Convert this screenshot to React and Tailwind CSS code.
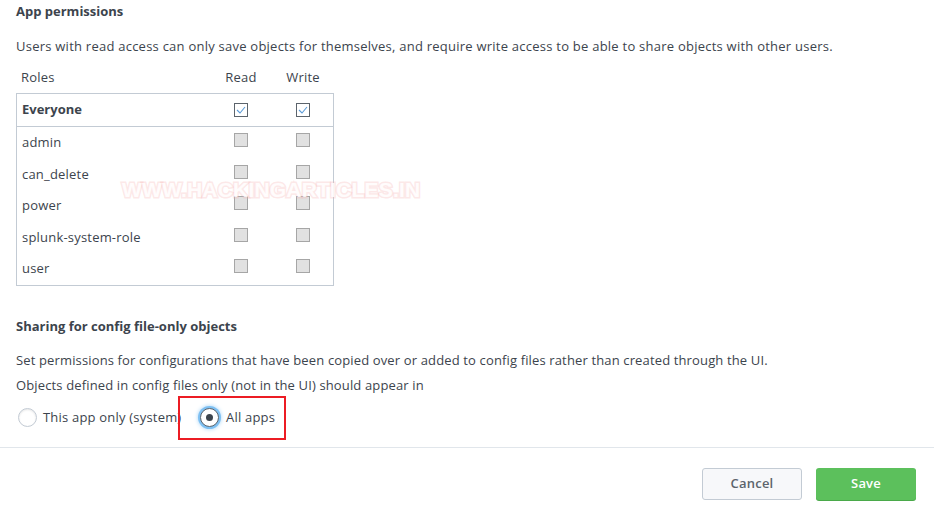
const roles = ['admin', 'can_delete', 'power', 'splunk-system-role', 'user'];

function CheckBox({ checked }) {
  if (checked) {
    return (
      <span className="flex h-[14px] w-[14px] items-center justify-center border border-[#5c646c] bg-white">
        <svg width="10" height="8" viewBox="0 0 10 8" fill="none">
          <path d="M1 4 L4 7 L9 1" stroke="#5a9bd8" strokeWidth="1.1" />
        </svg>
      </span>
    );
  }
  return <span className="block h-[14px] w-[14px] border border-[#a6a6a6] bg-[#e1e1e1]" />;
}

export default function App() {
  return (
    <div className="relative h-[514px] w-[934px] overflow-hidden bg-white text-[13px] tracking-[0.2px] text-[#3c444d]" style={{ fontFamily: '"Open Sans", sans-serif' }}>
      <div className="px-4">
        <h2 className="pt-[2px] text-[13px] font-bold leading-[18px] tracking-normal">App permissions</h2>
        <p className="mt-[17px] leading-[18px] tracking-[0.24px]">
          Users with read access can only save objects for themselves, and require write access to be able to share objects with other users.
        </p>

        <div className="mt-[15px] w-[318px]">
          <div className="flex h-[15px] items-center leading-[15px]">
            <span className="w-[201px] pl-[5px]">Roles</span>
            <span className="w-[48px] text-center">Read</span>
            <span className="ml-[14px] w-[48px] text-center">Write</span>
          </div>
          <div className="mt-[8px] border border-[#c3cbd4]">
            <div className="flex h-[33px] items-center border-b border-[#c3cbd4]">
              <span className="w-[200px] pl-[5px] font-bold tracking-normal">Everyone</span>
              <span className="flex w-[48px] justify-center"><CheckBox checked /></span>
              <span className="ml-[14px] flex w-[48px] justify-center"><CheckBox checked /></span>
            </div>
            {roles.map((r) => (
              <div key={r} className="flex h-[31.5px] items-start">
                <span className="w-[200px] pl-[5px] pt-[6px] leading-[18px]">{r}</span>
                <span className="flex w-[48px] justify-center pt-[6px]"><CheckBox /></span>
                <span className="ml-[14px] flex w-[48px] justify-center pt-[6px]"><CheckBox /></span>
              </div>
            ))}
          </div>
        </div>

        <h2 className="mt-[31px] text-[13px] font-bold leading-[18px] tracking-normal">Sharing for config file-only objects</h2>
        <p className="mt-[16px] leading-[18px] tracking-[0.14px]">
          Set permissions for configurations that have been copied over or added to config files rather than created through the UI.
        </p>
        <p className="mt-[7px] leading-[18px] tracking-[0.14px]">Objects defined in config files only (not in the UI) should appear in</p>

        <div className="mt-[2px] flex h-[44px] items-center">
          <label className="flex w-[162px] items-center pl-[2px]">
            <span className="block h-[19px] w-[19px] shrink-0 rounded-full border border-[#c3cbd4] bg-white shadow-[inset_0_1px_2px_rgba(0,0,0,0.1)]" />
            <span className="ml-[6px] whitespace-nowrap">This app only (system)</span>
          </label>
          <div className="relative z-10 flex h-[44px] w-[108px] items-center border-2 border-[#ec1c24] pl-[20px]">
            <span className="flex h-[19px] w-[19px] items-center justify-center rounded-full border border-[#5c646c] bg-white shadow-[0_0_0_2px_#7ec0f2,0_0_4px_2px_#a6d4f7]">
              <span className="block h-[7px] w-[7px] rounded-full bg-[#3c444d]" />
            </span>
            <span className="ml-[7px]">All apps</span>
          </div>
        </div>
      </div>

      <div className="mt-[7px] border-t border-[#e1e6eb]" />
      <div className="flex justify-end gap-[14px] px-[18px] pt-[20px]">
        <button className="h-[32px] w-[100px] rounded-[3px] border border-[#c3cbd4] bg-[#f7f8fa] font-semibold text-[#5c646c]">Cancel</button>
        <button className="h-[32px] w-[100px] rounded-[3px] bg-[#5cc05c] font-semibold text-white shadow-[0_1px_0_#4aa94a]">Save</button>
      </div>

      <div
        className="pointer-events-none absolute left-[122px] top-[174px] text-[21px] font-bold tracking-[0.2px] text-white/85"
        style={{ fontFamily: '"Liberation Sans", sans-serif', WebkitTextStroke: '3px rgba(245,175,175,0.3)', paintOrder: 'stroke' }}
      >
        WWW.HACKINGARTICLES.IN
      </div>
    </div>
  );
}
